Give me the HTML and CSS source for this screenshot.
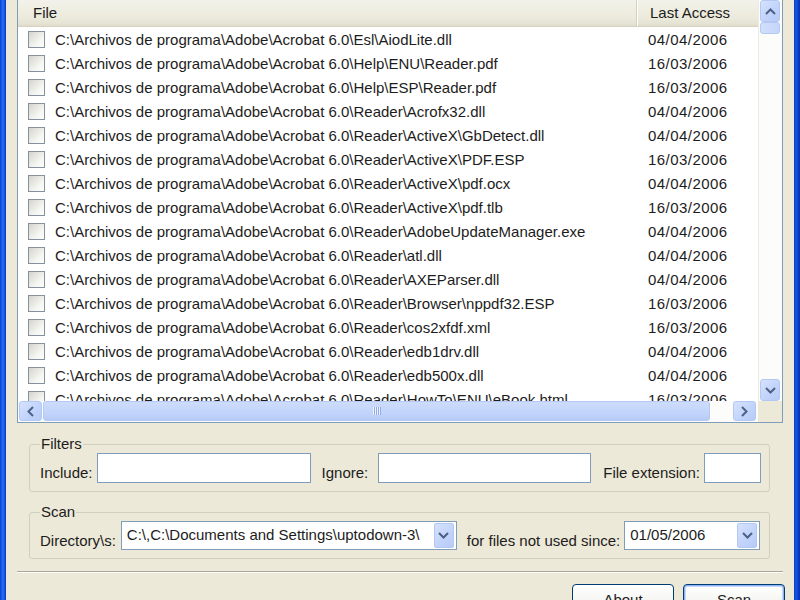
FILE: index.html
```html
<!DOCTYPE html>
<html>
<head>
<meta charset="utf-8">
<link rel="stylesheet" href="styles.css">
</head>
<body>
<div class="window">
  <div class="frame frame-l"></div>
  <div class="client">
    <div class="lv-wrap">
      <div class="listview">
        <div class="lv-main">
          <div class="lv-header">
            <div class="hcol hcol-file">File</div>
            <div class="hcol hcol-date">Last Access</div>
          </div>
          <div class="lv-rows">
            <div class="row"><span class="chk"></span><span class="path">C:\Archivos de programa\Adobe\Acrobat 6.0\Esl\AiodLite.dll</span><span class="date">04/04/2006</span></div>
            <div class="row"><span class="chk"></span><span class="path">C:\Archivos de programa\Adobe\Acrobat 6.0\Help\ENU\Reader.pdf</span><span class="date">16/03/2006</span></div>
            <div class="row"><span class="chk"></span><span class="path">C:\Archivos de programa\Adobe\Acrobat 6.0\Help\ESP\Reader.pdf</span><span class="date">16/03/2006</span></div>
            <div class="row"><span class="chk"></span><span class="path">C:\Archivos de programa\Adobe\Acrobat 6.0\Reader\Acrofx32.dll</span><span class="date">04/04/2006</span></div>
            <div class="row"><span class="chk"></span><span class="path">C:\Archivos de programa\Adobe\Acrobat 6.0\Reader\ActiveX\GbDetect.dll</span><span class="date">04/04/2006</span></div>
            <div class="row"><span class="chk"></span><span class="path">C:\Archivos de programa\Adobe\Acrobat 6.0\Reader\ActiveX\PDF.ESP</span><span class="date">16/03/2006</span></div>
            <div class="row"><span class="chk"></span><span class="path">C:\Archivos de programa\Adobe\Acrobat 6.0\Reader\ActiveX\pdf.ocx</span><span class="date">04/04/2006</span></div>
            <div class="row"><span class="chk"></span><span class="path">C:\Archivos de programa\Adobe\Acrobat 6.0\Reader\ActiveX\pdf.tlb</span><span class="date">16/03/2006</span></div>
            <div class="row"><span class="chk"></span><span class="path">C:\Archivos de programa\Adobe\Acrobat 6.0\Reader\AdobeUpdateManager.exe</span><span class="date">04/04/2006</span></div>
            <div class="row"><span class="chk"></span><span class="path">C:\Archivos de programa\Adobe\Acrobat 6.0\Reader\atl.dll</span><span class="date">04/04/2006</span></div>
            <div class="row"><span class="chk"></span><span class="path">C:\Archivos de programa\Adobe\Acrobat 6.0\Reader\AXEParser.dll</span><span class="date">04/04/2006</span></div>
            <div class="row"><span class="chk"></span><span class="path">C:\Archivos de programa\Adobe\Acrobat 6.0\Reader\Browser\nppdf32.ESP</span><span class="date">16/03/2006</span></div>
            <div class="row"><span class="chk"></span><span class="path">C:\Archivos de programa\Adobe\Acrobat 6.0\Reader\cos2xfdf.xml</span><span class="date">16/03/2006</span></div>
            <div class="row"><span class="chk"></span><span class="path">C:\Archivos de programa\Adobe\Acrobat 6.0\Reader\edb1drv.dll</span><span class="date">04/04/2006</span></div>
            <div class="row"><span class="chk"></span><span class="path">C:\Archivos de programa\Adobe\Acrobat 6.0\Reader\edb500x.dll</span><span class="date">04/04/2006</span></div>
            <div class="row"><span class="chk"></span><span class="path">C:\Archivos de programa\Adobe\Acrobat 6.0\Reader\HowTo\ENU\eBook.html</span><span class="date">16/03/2006</span></div>
          </div>
        </div>
        <div class="vscroll">
          <div class="sbtn sbtn-v"><svg width="11" height="7" viewBox="0 0 11 7"><path d="M1 6 L5.5 1.5 L10 6" fill="none" stroke="#4d6185" stroke-width="2"/></svg></div>
          <div class="vthumb"></div>
          <div class="vtrack"></div>
          <div class="sbtn sbtn-v"><svg width="11" height="7" viewBox="0 0 11 7"><path d="M1 1 L5.5 5.5 L10 1" fill="none" stroke="#4d6185" stroke-width="2"/></svg></div>
        </div>
        <div class="hscroll">
          <div class="sbtn sbtn-h"><svg width="7" height="11" viewBox="0 0 7 11"><path d="M6 1 L1.5 5.5 L6 10" fill="none" stroke="#4d6185" stroke-width="2"/></svg></div>
          <div class="hthumb"><span class="grip"></span></div>
          <div class="htrack"></div>
          <div class="sbtn sbtn-h"><svg width="7" height="11" viewBox="0 0 7 11"><path d="M1 1 L5.5 5.5 L1 10" fill="none" stroke="#4d6185" stroke-width="2"/></svg></div>
        </div>
        <div class="corner"></div>
      </div>
    </div>

    <div class="groups">
      <fieldset class="group">
        <legend>Filters</legend>
        <div class="grow">
          <label class="lbl">Include:</label>
          <div class="field f-include"></div>
          <label class="lbl lbl-ignore">Ignore:</label>
          <div class="field f-ignore"></div>
          <label class="lbl lbl-ext">File extension:</label>
          <div class="field f-ext"></div>
        </div>
      </fieldset>

      <fieldset class="group group-scan">
        <legend>Scan</legend>
        <div class="grow">
          <label class="lbl">Directory\s:</label>
          <div class="field combo f-dir"><span class="combo-text">C:\,C:\Documents and Settings\uptodown-3\</span><span class="dd"><svg width="11" height="7" viewBox="0 0 11 7"><path d="M1 1 L5.5 5.5 L10 1" fill="none" stroke="#4d6185" stroke-width="2"/></svg></span></div>
          <label class="lbl lbl-since">for files not used since:</label>
          <div class="field combo f-date"><span class="combo-text">01/05/2006</span><span class="dd"><svg width="11" height="7" viewBox="0 0 11 7"><path d="M1 1 L5.5 5.5 L10 1" fill="none" stroke="#4d6185" stroke-width="2"/></svg></span></div>
        </div>
      </fieldset>
    </div>

    <div class="separator"></div>

    <div class="buttons">
      <div class="btn">About</div>
      <div class="btn btn-default">Scan</div>
    </div>
  </div>
  <div class="frame frame-r"></div>
</div>
</body>
</html>
```

FILE: styles.css
```css
* { box-sizing: border-box; }
html, body { margin: 0; padding: 0; }
body {
  font-family: "Liberation Sans", Arial, sans-serif;
  font-size: 15px;
  color: #1c1c1c;
  background: #ece9d8;
}
.window {
  display: flex;
  width: 800px;
  height: 600px;
  overflow: hidden;
}
.frame { width: 6px; flex: none; }
.frame-l { background: linear-gradient(to right, #0a3fd0 0, #1c62e8 2px, #2a72f0 3px, #0d4ad8 5px, #0b3bc0 6px); }
.frame-r { background: linear-gradient(to right, #0b3bc0 0, #1658e0 2px, #0a3fd0 4px, #072fa8 6px); }
.client {
  flex: 1;
  min-width: 0;
  overflow: hidden;
  display: flex;
  flex-direction: column;
  background: #ece9d8;
}

/* list view */
.lv-wrap { padding: 0 11px; margin-top: -1px; }
.listview {
  border: 1px solid #7f9db9;
  background: #fff;
  height: 424px;
  display: grid;
  grid-template-columns: minmax(0, 1fr) 24px;
  grid-template-rows: 401px 21px;
  overflow: hidden;
}
.lv-main { overflow: hidden; min-width: 0; }
.lv-header {
  display: flex;
  height: 27px;
  background: linear-gradient(#f3f2ea, #ebeadb 70%, #e2e0cf);
  border-bottom: 1px solid #d6d2c2;
  box-shadow: inset 0 -2px 0 #e2dfcf;
}
.hcol { line-height: 26px; color: #1c1c1c; white-space: nowrap; }
.hcol-file { flex: none; width: 619px; padding-left: 15px; border-right: 1px solid #d3d0c0; box-shadow: 1px 0 0 #fff; }
.hcol-date { padding-left: 13px; }
.row {
  display: flex;
  align-items: center;
  height: 24px;
  white-space: nowrap;
}
.chk {
  flex: none;
  width: 17px;
  height: 17px;
  margin-left: 10px;
  border: 1px solid #85919e;
  background: linear-gradient(135deg, #d5d4cc, #f3f3ef 60%, #fff);
}
.path { flex: none; width: 592px; padding-left: 10px; overflow: hidden; }
.date { flex: none; padding-left: 11px; letter-spacing: 0.45px; }

/* scrollbars */
.vscroll {
  display: flex;
  flex-direction: column;
  background: #fcfcfa;
  border-left: 1px solid #eeede5;
  padding: 0 2px 0 1px;
}
.sbtn {
  flex: none;
  display: flex;
  align-items: center;
  justify-content: center;
  background: linear-gradient(135deg, #d6e2fd, #c1d3fb 60%, #b6cbf7);
  border: 1px solid #b4c8f4;
  border-radius: 3px;
}
.sbtn-v { height: 22px; }
.vthumb {
  flex: none;
  height: 12px;
  background: linear-gradient(to right, #d2dffc, #c5d6fc);
  border: 1px solid #b4c8f4;
  border-radius: 3px;
}
.vtrack { flex: 1; }
.hscroll {
  display: flex;
  min-width: 0;
  background: #fcfcfa;
  padding: 0 2px 1px 1px;
}
.sbtn-h { width: 23px; }
.hthumb {
  flex: none;
  width: 667px;
  margin-left: 1px;
  background: linear-gradient(#cddcfc, #c2d4fb 60%, #b8cbf6);
  border: 1px solid #b4c8f4;
  border-radius: 3px;
  display: flex;
  align-items: center;
  justify-content: center;
}
.grip {
  width: 8px;
  height: 8px;
  background: repeating-linear-gradient(to right, #eef3fe 0, #eef3fe 1px, #8faae6 1px, #8faae6 2px);
}
.htrack { flex: 1; }
.corner { background: #ece9d8; }

/* groups */
.groups {
  padding: 13px 24px 0 23px;
  display: flex;
  flex-direction: column;
  gap: 12px;
}
.group {
  margin: 0;
  border: 1px solid #d0d0bf;
  border-radius: 3px;
  padding: 1px 9px 8px 10px;
  min-width: 0;
}
.group legend {
  padding: 0 1px;
  line-height: 16px;
  color: #1c1c1c;
}
.grow {
  display: flex;
  align-items: center;
}
.lbl { flex: none; line-height: 18px; padding-top: 10px; white-space: nowrap; }
.field {
  flex: none;
  background: #fff;
  border: 1px solid #7f9db9;
  height: 30px;
}
.f-include { width: 214px; margin-left: 4px; }
.lbl-ignore { margin-left: 11px; }
.f-ignore { width: 213px; margin-left: 10px; }
.lbl-ext { margin-left: 12px; }
.f-ext { width: 57px; margin-left: 4px; }

.combo { display: flex; align-items: center; height: 29px; padding: 1px 2px 1px 5px; }
.combo-text { flex: 1; white-space: nowrap; overflow: hidden; padding-bottom: 2px; }
.dd {
  flex: none;
  width: 20px;
  height: 25px;
  display: flex;
  align-items: center;
  justify-content: center;
  background: linear-gradient(135deg, #d6e2fd, #c1d3fb 60%, #b6cbf7);
  border: 1px solid #b4c8f4;
  border-radius: 2px;
}
.f-dir { width: 336px; margin-left: 5px; }
.lbl-since { margin-left: 10px; }
.f-date { width: 136px; margin-left: 4px; }

.separator {
  margin: 12px 11px 0 11px;
  height: 2px;
  border-top: 1px solid #aca899;
  border-bottom: 1px solid #fff;
}

.buttons {
  display: flex;
  justify-content: flex-end;
  gap: 9px;
  padding: 11px 9px 0 0;
}
.btn {
  flex: none;
  width: 102px;
  height: 32px;
  border: 1px solid #003c74;
  border-radius: 4px;
  background: linear-gradient(#ffffff, #f4f4f0 60%, #e3e3db);
  text-align: center;
  line-height: 30px;
  color: #1c1c1c;
}
.btn-default {
  box-shadow: inset 0 0 0 1px #8fb4f6, inset 0 0 0 2px #c4d9fb;
}
```
